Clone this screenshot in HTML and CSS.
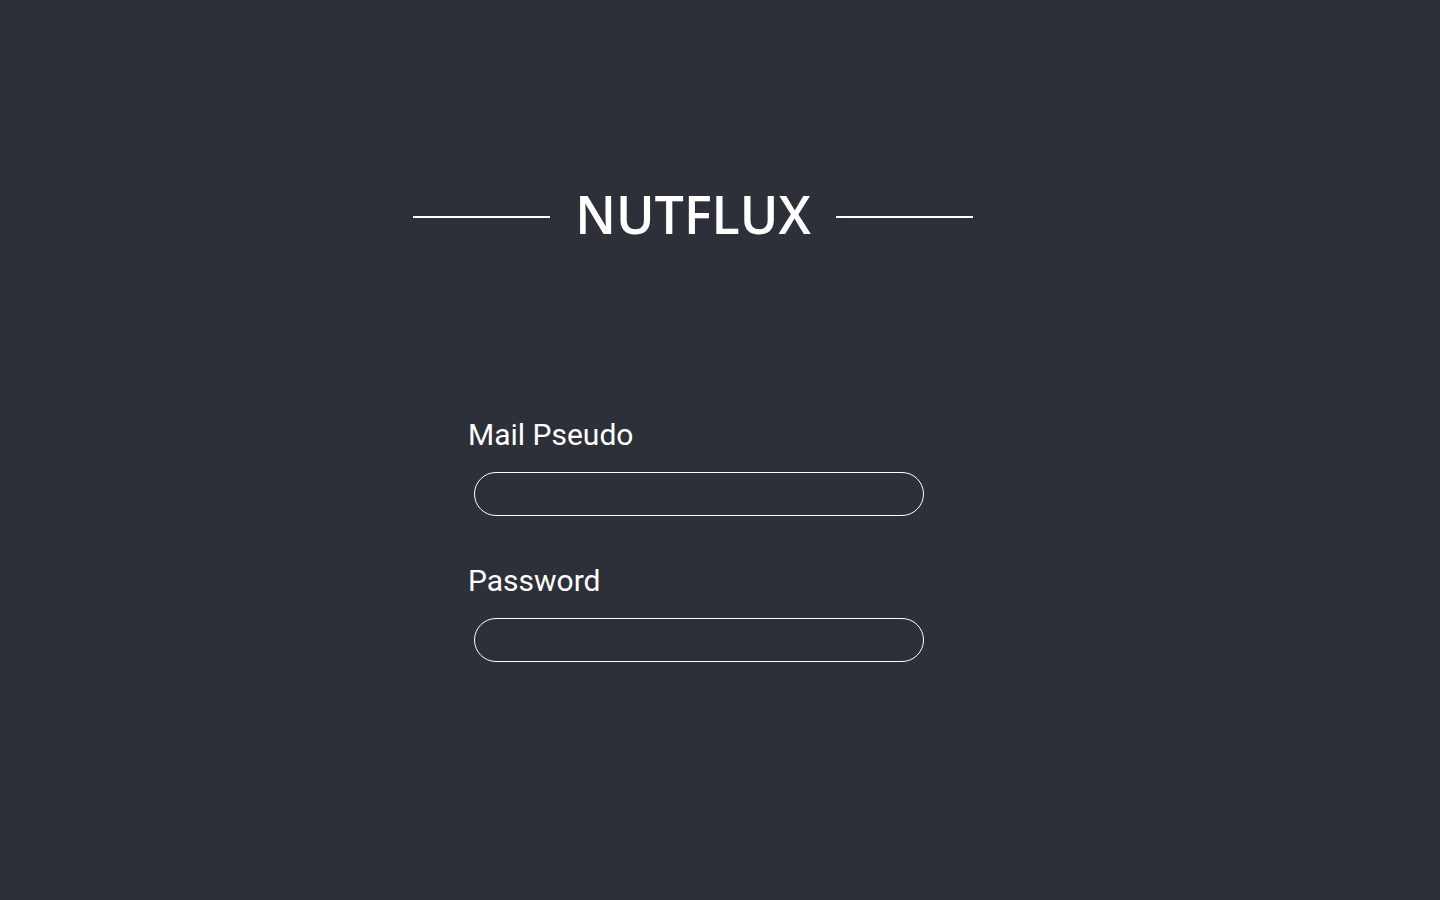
FILE: index.html
```html
<!DOCTYPE html>
<html lang="fr">
<head>
<meta charset="utf-8">
<title>Nutflux</title>
<link rel="stylesheet" href="styles.css">
</head>
<body>
<main class="page">
  <header class="brand">
    <span class="brand-line"></span>
    <h1 class="brand-title">NUTFLUX</h1>
    <span class="brand-line"></span>
  </header>
  <form class="login">
    <label class="field">
      <span class="field-label">Mail Pseudo</span>
      <input class="field-input" type="text">
    </label>
    <label class="field">
      <span class="field-label">Password</span>
      <input class="field-input" type="password">
    </label>
  </form>
</main>
</body>
</html>
```

FILE: styles.css
```css
html, body {
  margin: 0;
  padding: 0;
  height: 100%;
}
body {
  background: #2d3038;
  color: #ffffff;
  font-family: Roboto, "Liberation Sans", sans-serif;
}
.page {
  width: 560px;
  margin-left: 413px;
  padding-top: 182px;
}
.brand {
  display: flex;
  align-items: flex-start;
}
.brand-line {
  flex: 0 0 137px;
  height: 2px;
  margin-top: 34px;
  background: #ffffff;
}
.brand-title {
  flex: 1;
  margin: 0;
  text-align: center;
  font-family: "Open Sans", "Noto Sans", sans-serif;
  font-weight: 600;
  font-size: 52px;
  line-height: 64px;
}
.login {
  display: flex;
  flex-direction: column;
  gap: 47px;
  margin-top: 171px;
  padding-left: 55px;
}
.field {
  display: flex;
  flex-direction: column;
  gap: 19px;
}
.field-label {
  font-size: 30px;
  line-height: 36px;
}
.field-input {
  box-sizing: border-box;
  width: 450px;
  height: 44px;
  margin-left: 6px;
  border: 1px solid #ffffff;
  border-radius: 22px;
  background: transparent;
  color: #ffffff;
  padding: 0 18px;
  font-size: 18px;
  outline: none;
}
```
